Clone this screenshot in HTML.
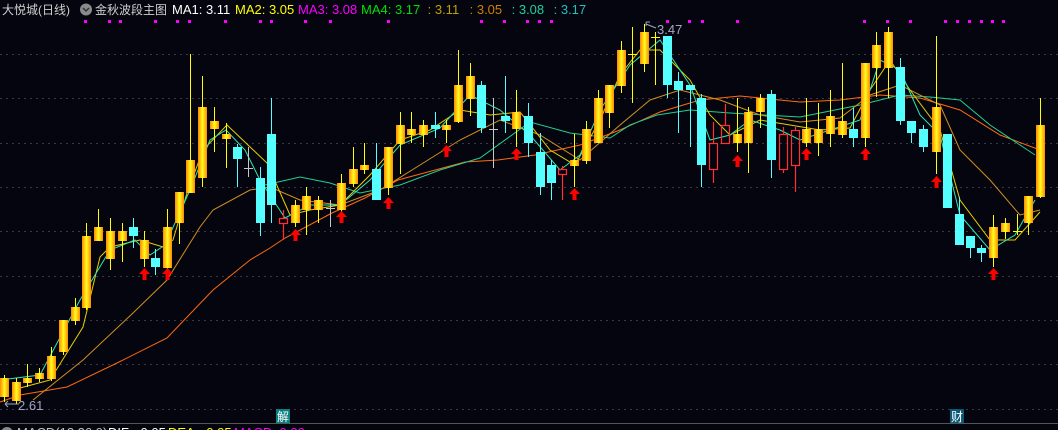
<!DOCTYPE html>
<html><head><meta charset="utf-8"><style>
html,body{margin:0;padding:0;background:#05050f;width:1058px;height:430px;overflow:hidden}
svg{position:absolute;left:0;top:0}
.t{font-family:"Liberation Sans","Noto Sans CJK SC",sans-serif;font-size:13px}
.s{font-size:12px}
</style></head><body>
<svg width="1058" height="430" xmlns="http://www.w3.org/2000/svg">
<defs><linearGradient id="g" x1="0" x2="1" y1="0" y2="0">
<stop offset="0" stop-color="#ff8800"/><stop offset="0.5" stop-color="#ffff20"/><stop offset="1" stop-color="#ff8800"/></linearGradient></defs>
<g stroke="#3a3a44" stroke-dasharray="2,4" stroke-width="1">
<line x1="0" x2="1058" y1="54.5" y2="54.5"/><line x1="0" x2="1058" y1="98.5" y2="98.5"/>
<line x1="0" x2="1058" y1="143.5" y2="143.5"/><line x1="0" x2="1058" y1="187.5" y2="187.5"/>
<line x1="0" x2="1058" y1="231.5" y2="231.5"/><line x1="0" x2="1058" y1="276.5" y2="276.5"/>
<line x1="0" x2="1058" y1="320.5" y2="320.5"/><line x1="0" x2="1058" y1="364.5" y2="364.5"/>
<line x1="0" x2="1058" y1="409.5" y2="409.5"/></g>
<line x1="0" x2="1058" y1="423.5" y2="423.5" stroke="#555"/>
<g fill="#ff00ff">
<rect x="84" y="20" width="3" height="3"/><rect x="108" y="20" width="3" height="3"/><rect x="119" y="20" width="3" height="3"/><rect x="154" y="20" width="3" height="3"/><rect x="176" y="20" width="3" height="3"/><rect x="188" y="20" width="3" height="3"/><rect x="224" y="20" width="3" height="3"/><rect x="259" y="20" width="3" height="3"/><rect x="270" y="20" width="3" height="3"/><rect x="304" y="20" width="3" height="3"/><rect x="329" y="20" width="3" height="3"/><rect x="387" y="20" width="3" height="3"/><rect x="480" y="20" width="3" height="3"/><rect x="503" y="20" width="3" height="3"/><rect x="526" y="20" width="3" height="3"/><rect x="538" y="20" width="3" height="3"/><rect x="550" y="20" width="3" height="3"/><rect x="666" y="20" width="3" height="3"/><rect x="688" y="20" width="3" height="3"/><rect x="701" y="20" width="3" height="3"/><rect x="736" y="20" width="3" height="3"/><rect x="863" y="20" width="3" height="3"/><rect x="886" y="20" width="3" height="3"/><rect x="909" y="20" width="3" height="3"/><rect x="944" y="20" width="3" height="3"/><rect x="956" y="20" width="3" height="3"/><rect x="968" y="20" width="3" height="3"/><rect x="980" y="20" width="3" height="3"/><rect x="991" y="20" width="3" height="3"/><rect x="1002" y="20" width="3" height="3"/>
</g>
<g fill="none" stroke-width="1">
<polyline stroke="#ff6a10" points="0,402 20,395 67,387 117,363 167,338 213,290 250,260 270,248 285,238 332,213 365,198 398,180 465,162 498,160 535,155 580,145 620,130 660,112 700,100 740,96 800,102 840,100 880,95 920,98 960,110 1000,135 1040,150"/>
<polyline stroke="#20d090" points="265,185 300,177 330,183 360,193 400,185 440,170 480,158 530,122 570,133 610,138 630,125 657,115 690,110 730,113 800,117 860,105 900,95 930,97 960,100 990,125 1035,155"/>
<polyline stroke="#d09020" points="33,400 83,360 133,313 167,280 200,227 213,210 250,190 270,187 300,200 340,205 380,190 420,165 460,140 500,120 540,135 580,160 620,125 650,100 680,90 720,100 760,115 800,122 840,118 870,95 900,85 940,105 960,150 990,180 1020,215 1040,210"/>
<polyline stroke="#e6d000" points="20,388 50,380 83,327 100,257 110,247 140,240 150,243 163,247 173,240 187,193 203,150 227,125 248,145 267,163 290,215 310,210 340,205 370,175 400,140 430,130 460,110 490,115 520,112 550,150 575,165 600,120 620,75 640,50 660,50 690,80 710,115 730,135 760,120 790,125 820,130 850,128 870,90 890,60 910,90 940,130 960,200 990,240 1015,240 1040,212"/>
<polyline stroke="#30e8b0" points="0,380 40,375 80,300 110,250 135,240 150,255 165,245 190,190 210,140 226,130 245,150 260,180 285,218 310,205 340,205 370,180 400,145 440,128 470,95 500,110 530,135 560,170 580,155 600,110 630,65 660,40 690,85 710,140 730,135 750,120 780,130 800,140 830,130 860,120 880,60 900,70 920,115 940,135 960,215 990,250 1015,235 1035,200"/>
</g>
<g stroke="#ffff00" fill="url(#g)">
<line x1="4.5" x2="4.5" y1="375" y2="402"/><rect stroke="none" x="0" y="378" width="9" height="19"/>
<line x1="16.5" x2="16.5" y1="378" y2="404"/><rect stroke="none" x="12" y="382" width="9" height="19"/>
<line x1="27.5" x2="27.5" y1="364" y2="387"/><rect stroke="none" x="23" y="378" width="9" height="5"/>
<line x1="39.5" x2="39.5" y1="368" y2="382"/><rect stroke="none" x="35" y="373" width="9" height="6"/>
<line x1="51.5" x2="51.5" y1="347" y2="381"/><rect stroke="none" x="47" y="356" width="9" height="23"/>
<line x1="63.5" x2="63.5" y1="320" y2="355"/><rect stroke="none" x="59" y="320" width="9" height="32"/>
<line x1="75.5" x2="75.5" y1="298" y2="325"/><rect stroke="none" x="71" y="307" width="9" height="14"/>
<line x1="86.5" x2="86.5" y1="223" y2="310"/><rect stroke="none" x="82" y="236" width="9" height="72"/>
<line x1="98.5" x2="98.5" y1="209" y2="241"/><rect stroke="none" x="94" y="227" width="9" height="14"/>
<line x1="110.5" x2="110.5" y1="218" y2="270"/><rect stroke="none" x="106" y="231" width="9" height="28"/>
<line x1="122.5" x2="122.5" y1="223" y2="262"/><rect stroke="none" x="118" y="231" width="9" height="10"/>
<line x1="144.5" x2="144.5" y1="231" y2="267"/><rect stroke="none" x="140" y="240" width="9" height="19"/>
<line x1="167.5" x2="167.5" y1="209" y2="273"/><rect stroke="none" x="163" y="227" width="9" height="41"/>
<line x1="179.5" x2="179.5" y1="192" y2="244"/><rect stroke="none" x="175" y="192" width="9" height="31"/>
<line x1="190.5" x2="190.5" y1="54" y2="193"/><rect stroke="none" x="186" y="160" width="9" height="33"/>
<line x1="202.5" x2="202.5" y1="76" y2="187"/><rect stroke="none" x="198" y="107" width="9" height="71"/>
<line x1="214.5" x2="214.5" y1="107" y2="152"/><rect stroke="none" x="210" y="121" width="9" height="8"/>
<line x1="226.5" x2="226.5" y1="123" y2="168"/><rect stroke="none" x="222" y="134" width="9" height="5"/>
<line x1="295.5" x2="295.5" y1="200" y2="227"/><rect stroke="none" x="291" y="205" width="9" height="18"/>
<line x1="306.5" x2="306.5" y1="187" y2="235"/><rect stroke="none" x="302" y="196" width="9" height="14"/>
<line x1="318.5" x2="318.5" y1="196" y2="223"/><rect stroke="none" x="314" y="200" width="9" height="10"/>
<line x1="341.5" x2="341.5" y1="174" y2="213"/><rect stroke="none" x="337" y="183" width="9" height="27"/>
<line x1="353.5" x2="353.5" y1="147" y2="187"/><rect stroke="none" x="349" y="169" width="9" height="15"/>
<line x1="364.5" x2="364.5" y1="143" y2="174"/><rect stroke="none" x="360" y="165" width="9" height="5"/>
<line x1="388.5" x2="388.5" y1="147" y2="195"/><rect stroke="none" x="384" y="147" width="9" height="41"/>
<line x1="400.5" x2="400.5" y1="112" y2="174"/><rect stroke="none" x="396" y="125" width="9" height="19"/>
<line x1="411.5" x2="411.5" y1="112" y2="143"/><rect stroke="none" x="407" y="129" width="9" height="6"/>
<line x1="423.5" x2="423.5" y1="120" y2="147"/><rect stroke="none" x="419" y="125" width="9" height="10"/>
<line x1="446.5" x2="446.5" y1="120" y2="143"/><rect stroke="none" x="442" y="125" width="9" height="5"/>
<line x1="458.5" x2="458.5" y1="50" y2="123"/><rect stroke="none" x="454" y="85" width="9" height="37"/>
<line x1="470.5" x2="470.5" y1="63" y2="116"/><rect stroke="none" x="466" y="76" width="9" height="23"/>
<line x1="516.5" x2="516.5" y1="90" y2="147"/><rect stroke="none" x="512" y="112" width="9" height="17"/>
<line x1="574.5" x2="574.5" y1="134" y2="187"/><rect stroke="none" x="570" y="160" width="9" height="6"/>
<line x1="586.5" x2="586.5" y1="121" y2="164"/><rect stroke="none" x="582" y="129" width="9" height="32"/>
<line x1="598.5" x2="598.5" y1="90" y2="143"/><rect stroke="none" x="594" y="98" width="9" height="45"/>
<line x1="609.5" x2="609.5" y1="85" y2="128"/><rect stroke="none" x="605" y="85" width="9" height="28"/>
<line x1="621.5" x2="621.5" y1="41" y2="93"/><rect stroke="none" x="617" y="50" width="9" height="36"/>
<line x1="644.5" x2="644.5" y1="24" y2="72"/><rect stroke="none" x="640" y="32" width="9" height="32"/>
<line x1="737.5" x2="737.5" y1="98" y2="152"/><rect stroke="none" x="733" y="134" width="9" height="9"/>
<line x1="748.5" x2="748.5" y1="107" y2="173"/><rect stroke="none" x="744" y="112" width="9" height="31"/>
<line x1="760.5" x2="760.5" y1="94" y2="128"/><rect stroke="none" x="756" y="98" width="9" height="14"/>
<line x1="806.5" x2="806.5" y1="98" y2="147"/><rect stroke="none" x="802" y="129" width="9" height="14"/>
<line x1="818.5" x2="818.5" y1="103" y2="156"/><rect stroke="none" x="814" y="129" width="9" height="14"/>
<line x1="830.5" x2="830.5" y1="90" y2="147"/><rect stroke="none" x="826" y="116" width="9" height="18"/>
<line x1="842.5" x2="842.5" y1="63" y2="138"/><rect stroke="none" x="838" y="121" width="9" height="14"/>
<line x1="865.5" x2="865.5" y1="63" y2="147"/><rect stroke="none" x="861" y="63" width="9" height="75"/>
<line x1="876.5" x2="876.5" y1="32" y2="97"/><rect stroke="none" x="872" y="45" width="9" height="23"/>
<line x1="888.5" x2="888.5" y1="27" y2="98"/><rect stroke="none" x="884" y="32" width="9" height="36"/>
<line x1="936.5" x2="936.5" y1="36" y2="174"/><rect stroke="none" x="932" y="107" width="9" height="45"/>
<line x1="993.5" x2="993.5" y1="215" y2="267"/><rect stroke="none" x="989" y="227" width="9" height="31"/>
<line x1="1005.5" x2="1005.5" y1="218" y2="239"/><rect stroke="none" x="1001" y="223" width="9" height="9"/>
<line x1="1028.5" x2="1028.5" y1="196" y2="235"/><rect stroke="none" x="1024" y="196" width="9" height="27"/>
<line x1="1040.5" x2="1040.5" y1="98" y2="198"/><rect stroke="none" x="1036" y="125" width="9" height="72"/>
</g>
<g stroke="#55ffff" fill="#55ffff">
<line x1="133.5" x2="133.5" y1="218" y2="248"/><rect stroke="none" x="129" y="227" width="9" height="9"/>
<line x1="155.5" x2="155.5" y1="249" y2="275"/><rect stroke="none" x="151" y="258" width="9" height="9"/>
<line x1="237.5" x2="237.5" y1="144" y2="187"/><rect stroke="none" x="233" y="147" width="9" height="12"/>
<line x1="260.5" x2="260.5" y1="167" y2="236"/><rect stroke="none" x="256" y="178" width="9" height="45"/>
<line x1="271.5" x2="271.5" y1="98" y2="223"/><rect stroke="none" x="267" y="134" width="9" height="71"/>
<line x1="376.5" x2="376.5" y1="143" y2="200"/><rect stroke="none" x="372" y="169" width="9" height="31"/>
<line x1="435.5" x2="435.5" y1="112" y2="138"/><rect stroke="none" x="431" y="125" width="9" height="4"/>
<line x1="481.5" x2="481.5" y1="81" y2="133"/><rect stroke="none" x="477" y="85" width="9" height="43"/>
<line x1="505.5" x2="505.5" y1="76" y2="133"/><rect stroke="none" x="501" y="116" width="9" height="5"/>
<line x1="528.5" x2="528.5" y1="103" y2="157"/><rect stroke="none" x="524" y="116" width="9" height="27"/>
<line x1="540.5" x2="540.5" y1="133" y2="195"/><rect stroke="none" x="536" y="152" width="9" height="35"/>
<line x1="551.5" x2="551.5" y1="160" y2="200"/><rect stroke="none" x="547" y="165" width="9" height="18"/>
<line x1="667.5" x2="667.5" y1="36" y2="98"/><rect stroke="none" x="663" y="36" width="9" height="49"/>
<line x1="678.5" x2="678.5" y1="72" y2="133"/><rect stroke="none" x="674" y="81" width="9" height="9"/>
<line x1="690.5" x2="690.5" y1="85" y2="147"/><rect stroke="none" x="686" y="85" width="9" height="5"/>
<line x1="701.5" x2="701.5" y1="94" y2="187"/><rect stroke="none" x="697" y="98" width="9" height="67"/>
<line x1="771.5" x2="771.5" y1="90" y2="178"/><rect stroke="none" x="767" y="94" width="9" height="66"/>
<line x1="853.5" x2="853.5" y1="108" y2="147"/><rect stroke="none" x="849" y="129" width="9" height="9"/>
<line x1="900.5" x2="900.5" y1="58" y2="125"/><rect stroke="none" x="896" y="67" width="9" height="54"/>
<line x1="911.5" x2="911.5" y1="121" y2="143"/><rect stroke="none" x="907" y="121" width="9" height="12"/>
<line x1="923.5" x2="923.5" y1="125" y2="152"/><rect stroke="none" x="919" y="129" width="9" height="18"/>
<rect stroke="none" x="943" y="134" width="9" height="74"/>
<line x1="959.5" x2="959.5" y1="197" y2="245"/><rect stroke="none" x="955" y="214" width="9" height="31"/>
<line x1="970.5" x2="970.5" y1="236" y2="258"/><rect stroke="none" x="966" y="236" width="9" height="12"/>
<line x1="981.5" x2="981.5" y1="245" y2="262"/><rect stroke="none" x="977" y="248" width="9" height="5"/>
</g>
<g stroke="#ff3030" fill="none" stroke-width="1.2">
<line x1="283.5" x2="283.5" y1="210" y2="218"/><line x1="283.5" x2="283.5" y1="224" y2="240"/><rect x="279.5" y="218.5" width="8" height="5"/>
<line x1="562.5" x2="562.5" y1="166" y2="169"/><line x1="562.5" x2="562.5" y1="175" y2="200"/><rect x="558.5" y="169.5" width="8" height="5"/>
<line x1="713.5" x2="713.5" y1="122" y2="143"/><line x1="713.5" x2="713.5" y1="170" y2="183"/><rect x="709.5" y="143.5" width="8" height="26"/>
<line x1="725.5" x2="725.5" y1="104" y2="125"/><rect x="721.5" y="125.5" width="8" height="18"/>
<line x1="783.5" x2="783.5" y1="127" y2="134"/><line x1="783.5" x2="783.5" y1="170" y2="173"/><rect x="779.5" y="134.5" width="8" height="35"/>
<line x1="795.5" x2="795.5" y1="127" y2="130"/><line x1="795.5" x2="795.5" y1="166" y2="192"/><rect x="791.5" y="130.5" width="8" height="35"/>
</g>
<g stroke="#c8c8c8">
<line x1="248.5" x2="248.5" y1="147" y2="177"/><line x1="244" x2="253" y1="168.5" y2="168.5"/>
<line x1="330.5" x2="330.5" y1="200" y2="227"/><line x1="326" x2="335" y1="208.5" y2="208.5"/>
<line x1="493.5" x2="493.5" y1="98" y2="168"/><line x1="489" x2="498" y1="129.5" y2="129.5"/>
</g>
<g stroke="#ffff00">
<line x1="632.5" x2="632.5" y1="27" y2="103"/><line x1="628" x2="637" y1="54.5" y2="54.5"/>
<line x1="655.5" x2="655.5" y1="32" y2="85"/><line x1="651" x2="660" y1="37.5" y2="37.5"/>
<line x1="1017.5" x2="1017.5" y1="214" y2="235"/><line x1="1013" x2="1022" y1="231.5" y2="231.5"/>
</g>
<g fill="#ff0000">
<path d="M144.5,268l-5.5,6h3.5v6h4v-6h3.5z"/>
<path d="M167.5,268l-5.5,6h3.5v6h4v-6h3.5z"/>
<path d="M295.5,229l-5.5,6h3.5v6h4v-6h3.5z"/>
<path d="M341.5,211l-5.5,6h3.5v6h4v-6h3.5z"/>
<path d="M388.5,197l-5.5,6h3.5v6h4v-6h3.5z"/>
<path d="M446.5,145l-5.5,6h3.5v6h4v-6h3.5z"/>
<path d="M516.5,148l-5.5,6h3.5v6h4v-6h3.5z"/>
<path d="M574.5,188l-5.5,6h3.5v6h4v-6h3.5z"/>
<path d="M737.5,155l-5.5,6h3.5v6h4v-6h3.5z"/>
<path d="M806.5,148l-5.5,6h3.5v6h4v-6h3.5z"/>
<path d="M865.5,148l-5.5,6h3.5v6h4v-6h3.5z"/>
<path d="M936.5,176l-5.5,6h3.5v6h4v-6h3.5z"/>
<path d="M993.5,268l-5.5,6h3.5v6h4v-6h3.5z"/>
</g>
<g stroke="#a0a8c0" fill="none"><path d="M646,22h4M646,22v4M646,24l10,4"/><path d="M5,404h14M5,404l3,-3M5,404l3,3"/></g>
<text x="657" y="34" class="t" fill="#a0a8c0">3.47</text>
<text x="18" y="410" class="t" fill="#a0a8c0">2.61</text>
<rect x="276" y="409" width="14" height="14" fill="#0a8080"/>
<text x="277" y="421" class="t s" fill="#fff">解</text>
<rect x="950" y="409" width="14" height="14" fill="#0a5878"/>
<text x="951" y="421" class="t s" fill="#fff">财</text>
<text x="2" y="14" class="t s" fill="#d0d0d0">大悦城(日线)</text>
<circle cx="86" cy="9.5" r="6" fill="#8a8a8a"/><path d="M83,8l3,3l3,-3" stroke="#333" stroke-width="1.5" fill="none"/>
<text x="95" y="14" class="t s" fill="#d0d0d0">金秋波段主图</text>
<text y="14" class="t"><tspan x="172" fill="#ffffff">MA1: 3.11</tspan><tspan x="235" fill="#ffff00">MA2: 3.05</tspan><tspan x="298" fill="#ff00ff">MA3: 3.08</tspan><tspan x="361" fill="#00e000">MA4: 3.17</tspan><tspan x="424" fill="#c0a000"> : 3.11</tspan><tspan x="466" fill="#d08000"> : 3.05</tspan><tspan x="508" fill="#20d0a0"> : 3.08</tspan><tspan x="550" fill="#20c0c0"> : 3.17</tspan></text>
<circle cx="7" cy="433" r="6" fill="#8a8a8a"/>
<text y="437" class="t"><tspan x="17" fill="#c0c0c0">MACD(12,26,9)</tspan><tspan x="108" fill="#ffffff">DIF: -0.05</tspan><tspan x="168" fill="#ffff00">DEA: -0.05</tspan><tspan x="234" fill="#ff00ff">MACD: 0.00</tspan></text>
</svg>
</body></html>
